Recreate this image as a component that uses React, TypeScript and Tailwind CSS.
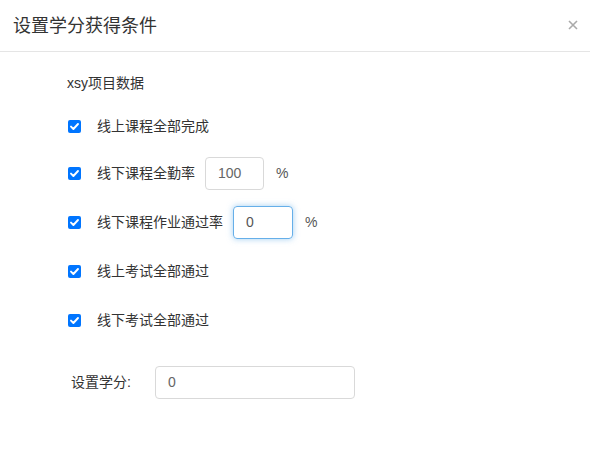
import React from 'react';

const rows = [
  { label: '线上课程全部完成' },
  { label: '线下课程全勤率', value: '100', width: 'w-[59px]', shift: '-mt-[2px]' },
  { label: '线下课程作业通过率', value: '0', width: 'w-[60px]', focused: true },
  { label: '线上考试全部通过' },
  { label: '线下考试全部通过' },
];

function Check() {
  return (
    <span className="flex h-[13px] w-[13px] items-center justify-center rounded-[2px] bg-[#0075ff]">
      <svg width="11" height="11" viewBox="0 0 11 11">
        <path d="M2 5.6 L4.4 8 L9 3" stroke="#fff" strokeWidth="1.9" fill="none" strokeLinecap="round" strokeLinejoin="round" />
      </svg>
    </span>
  );
}

export default function App() {
  return (
    <div className="h-[463px] w-[590px] bg-white text-[#333] font-['Liberation_Sans','Noto_Sans_CJK_SC',sans-serif]">
      <div className="flex h-[52px] items-center justify-between border-b border-[#e5e5e5] pl-[13px] pr-[12px]">
        <h2 className="text-[18px] leading-none text-[#333]">设置学分获得条件</h2>
        <svg width="10" height="10" viewBox="0 0 10 10" className="-mt-[2px]">
          <path d="M1 1 L9 9 M9 1 L1 9" stroke="#aaa" strokeWidth="1.6" />
        </svg>
      </div>

      <div className="pl-[67px] pt-[22px]">
        <div className="text-[14px] leading-[18px]">xsy项目数据</div>

        <div className="mt-[18px] flex flex-col gap-[16px]">
          {rows.map((r) => (
            <div key={r.label} className={`flex h-[33px] items-center text-[14px] ${r.shift ?? ''}`}>
              <span className="ml-[1px]"><Check /></span>
              <span className="ml-[16px]">{r.label}</span>
              {r.value !== undefined && (
                <>
                  <div
                    className={`ml-[10px] ${r.width} flex h-[33px] items-center rounded-[4px] border pl-[12px] text-[14px] ${
                      r.focused
                        ? 'border-[#66afe9] shadow-[0_0_6px_rgba(102,175,233,0.6)] text-[#555]'
                        : 'border-[#d9d9d9] text-[#666]'
                    }`}
                  >
                    {r.value}
                  </div>
                  <span className="ml-[12px] text-[#555]">%</span>
                </>
              )}
            </div>
          ))}
        </div>

        <div className="mt-[29px] flex items-center text-[14px]">
          <span className="ml-[4px] w-[84px]">设置学分:</span>
          <div className="flex h-[33px] w-[200px] items-center rounded-[4px] border border-[#d9d9d9] pl-[12px] text-[#666]">
            0
          </div>
        </div>
      </div>
    </div>
  );
}
